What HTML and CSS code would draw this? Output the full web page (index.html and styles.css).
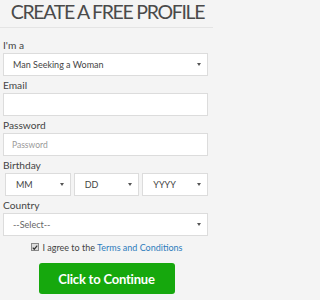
FILE: index.html
```html
<!DOCTYPE html>
<html>
<head>
<meta charset="utf-8">
<link rel="stylesheet" href="styles.css">
</head>
<body>
<div class="page">
  <h1 class="title">CREATE A FREE PROFILE</h1>
  <form class="form">
    <label class="label">I'm a</label>
    <div class="field select"><span class="value">Man Seeking a Woman</span><span class="arrow"></span></div>

    <label class="label">Email</label>
    <div class="field input"></div>

    <label class="label">Password</label>
    <div class="field input"><span class="placeholder">Password</span></div>

    <label class="label">Birthday</label>
    <div class="bday">
      <div class="field select small"><span class="value">MM</span><span class="arrow"></span></div>
      <div class="field select small"><span class="value">DD</span><span class="arrow"></span></div>
      <div class="field select small"><span class="value">YYYY</span><span class="arrow"></span></div>
    </div>

    <label class="label">Country</label>
    <div class="field select"><span class="value muted">--Select--</span><span class="arrow"></span></div>

    <div class="agree">
      <span class="check"><svg width="8" height="8" viewBox="0 0 8 8"><path d="M1 4.2 L3 6.3 L7 1.5" fill="none" stroke="#333" stroke-width="1.6"/></svg></span>
      <span>I agree to the <a class="link">Terms and Conditions</a></span>
    </div>

    <div class="actions">
      <button type="button" class="btn">Click to Continue</button>
    </div>
  </form>
</div>
</body>
</html>
```

FILE: styles.css
```css
html, body {
  margin: 0;
  padding: 0;
  background: #f4f4f4;
}
body {
  font-family: Lato, "Open Sans", sans-serif;
  color: #444;
}
.page {
  width: 213px;
}
.title {
  margin: 0;
  height: 28px;
  line-height: 24px;
  font-size: 19.5px;
  font-weight: 400;
  color: #4a4a4a;
  text-align: center;
  border-bottom: 1px solid #e4e4e4;
  white-space: nowrap;
  letter-spacing: -1.3px;
  padding-left: 2px;
  box-sizing: border-box;
}
.form {
  display: flex;
  flex-direction: column;
  padding: 0 5px 0 3px;
  margin: 0;
}
.label {
  display: block;
  font-size: 10.2px;
  line-height: 16px;
  height: 16px;
  margin-top: 1px;
  color: #444;
  padding-left: 0;
}
.form > .label:first-child {
  margin-top: 9px;
}
.field {
  box-sizing: border-box;
  height: 23px;
  background: #fff;
  border: 1px solid #dcdcdc;
  display: flex;
  align-items: center;
  font-size: 9px;
  color: #444;
  padding: 0 6px 0 9px;
}
.field.input {
  padding-left: 8px;
}
.select .value {
  flex: 1;
}
.muted {
  color: #666;
}
.placeholder {
  color: #999;
  font-size: 8.5px;
}
.arrow {
  width: 0;
  height: 0;
  border-left: 2px solid transparent;
  border-right: 2px solid transparent;
  border-top: 3px solid #555;
}
.bday {
  display: flex;
  gap: 3px;
  padding-left: 2px;
}
.bday .field {
  flex: 1;
  margin: 0;
  padding-left: 10px;
}
.agree {
  display: flex;
  align-items: center;
  justify-content: center;
  gap: 3px;
  font-size: 9px;
  color: #444;
  margin-top: 5px;
  height: 12px;
  padding-left: 3px;
}
.check {
  box-sizing: border-box;
  width: 8px;
  height: 8px;
  border: 1px solid #888;
  background: #ddd;
  display: flex;
  align-items: center;
  justify-content: center;
}
.check svg {
  display: block;
  width: 7px;
  height: 7px;
}
.link {
  color: #2e7cbc;
}
.actions {
  display: flex;
  justify-content: center;
  margin-top: 10px;
}
.btn {
  width: 136px;
  height: 31px;
  background: #16a80d;
  border: 0;
  border-radius: 3px;
  color: #fff;
  font-family: Lato, "Open Sans", sans-serif;
  font-size: 13px;
  font-weight: 700;
  letter-spacing: -0.2px;
  padding: 0;
  margin-left: 2px;
}
```
